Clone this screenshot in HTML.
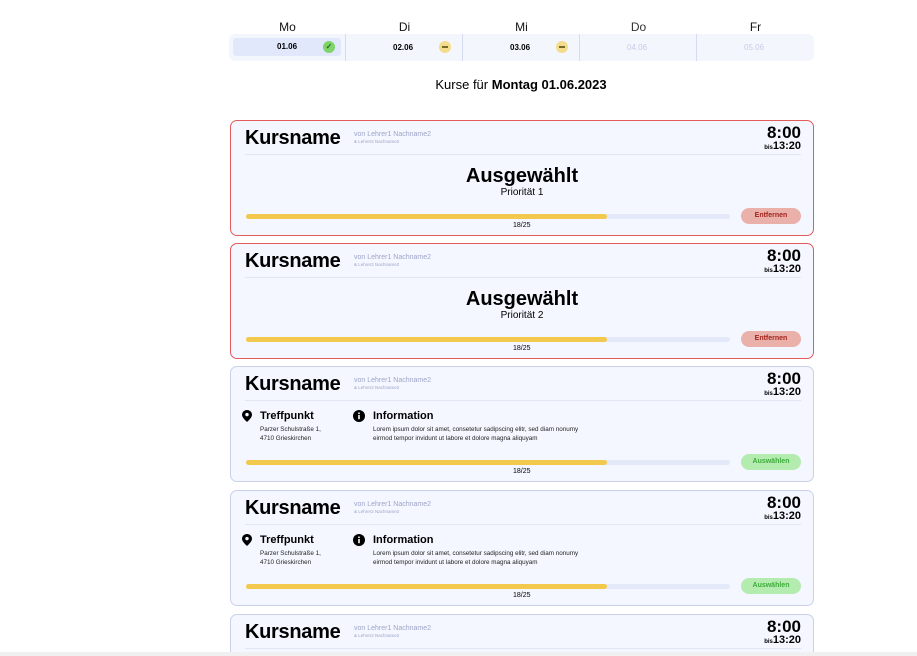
<!DOCTYPE html>
<html style="width:917px;height:656px;overflow:hidden"><head><meta charset="utf-8"><style>
*{box-sizing:border-box;margin:0;padding:0}
body{width:917px;height:656px;overflow:hidden;background:#fff;font-family:"Liberation Sans",sans-serif;color:#000;position:relative}
.days{position:absolute;left:229px;top:20px;width:585px}
.lbl{position:absolute;top:0;font-size:12px;width:117px;text-align:center;color:#111}
.bar{position:absolute;top:14px;left:0;width:585px;height:27px;background:#f3f6fd;border-radius:6px}
.cell{position:absolute;top:0;height:27px;width:117px;font-size:8px;font-weight:bold}
.sep{position:absolute;top:0;width:1px;height:27px;background:#d5dcef}
.dot{position:absolute;width:12px;height:12px;border-radius:50%;top:7px}
h2{position:absolute;top:77px;left:0;width:1042px;text-align:center;font-size:13px;font-weight:normal}
.card{position:absolute;left:230px;width:584px;height:116px;background:#f4f7ff;border:1px solid #c9d1ea;border-radius:7px;overflow:hidden}
.card.red{border-color:#e25b5b}
.kn{position:absolute;left:14px;top:6px;font-size:20px;font-weight:bold;letter-spacing:-0.3px}
.by{position:absolute;left:123px;top:10px;font-size:7px;color:#9ea4c8}
.by2{position:absolute;left:123px;top:18px;font-size:4.5px;color:#9ea4c8}
.t1{position:absolute;right:12px;top:2px;font-size:17px;font-weight:bold}
.t2{position:absolute;right:12px;top:19px;font-size:11px;font-weight:bold}
.t2 small{font-size:6px}
.hr{position:absolute;left:14px;right:12px;top:33px;height:1px;background:#e1e6f4}
.aus{position:absolute;left:0;right:0;top:44px;text-align:center;font-size:20px;font-weight:bold}
.pr{position:absolute;left:0;right:0;top:66px;text-align:center;font-size:10px}
.pb{position:absolute;left:15px;top:93px;width:484px;height:5px;background:#e3e9f8;border-radius:3px}
.pb i{display:block;width:361px;height:5px;background:#f2c94c;border-radius:3px}
.cnt{position:absolute;left:282px;top:101px;font-size:7px}
.btn{position:absolute;left:510px;top:87px;width:60px;height:16px;border-radius:8px;font-size:7px;font-weight:bold;text-align:center;line-height:16px}
.rm{background:#eab1ab;color:#a3231c}
.sel{background:#b4ecb0;color:#3dab3a}
.ic{position:absolute;font-size:11px;font-weight:bold;top:43px}
.sm{position:absolute;font-size:6.3px;line-height:9px;top:58px;color:#222}
</style></head><body>
<div class="days">
<div class="lbl" style="left:0">Mo</div><div class="lbl" style="left:117px">Di</div><div class="lbl" style="left:234px">Mi</div><div class="lbl" style="left:351px;color:#333">Do</div><div class="lbl" style="left:468px">Fr</div>
<div class="bar">
<div class="cell" style="left:0"><div style="position:absolute;left:4px;top:4px;width:108px;height:18px;background:#e1e8fb;border-radius:3px"></div><span style="position:absolute;left:48px;top:8px">01.06</span><div class="dot" style="left:94px;background:#7ed46a;color:#236b1c;font-size:8px;text-align:center;line-height:12px">✓</div></div>
<div class="sep" style="left:116px"></div>
<div class="cell" style="left:117px"><span style="position:absolute;left:47px;top:9px">02.06</span><div class="dot" style="left:93px;background:#f3dc8c"><div style="position:absolute;left:3px;top:5px;width:6px;height:2px;background:#7a6a2a"></div></div></div>
<div class="sep" style="left:233px"></div>
<div class="cell" style="left:234px"><span style="position:absolute;left:47px;top:9px">03.06</span><div class="dot" style="left:93px;background:#f3dc8c"><div style="position:absolute;left:3px;top:5px;width:6px;height:2px;background:#7a6a2a"></div></div></div>
<div class="sep" style="left:350px"></div>
<div class="cell" style="left:351px;color:#c7cde6;font-weight:normal"><span style="position:absolute;left:47px;top:9px">04.06</span></div>
<div class="sep" style="left:467px"></div>
<div class="cell" style="left:468px;color:#c7cde6;font-weight:normal"><span style="position:absolute;left:47px;top:9px">05.06</span></div>
</div></div>
<h2>Kurse für <b>Montag 01.06.2023</b></h2>

<div class="card red" style="top:120px">
<div class="kn">Kursname</div><div class="by">von Lehrer1 Nachname2</div><div class="by2">& Lehrer2 Nachname2</div>
<div class="t1">8:00</div><div class="t2"><small>bis</small>13:20</div><div class="hr"></div>
<div class="aus">Ausgewählt</div><div class="pr">Priorität 1</div>
<div class="pb"><i></i></div><div class="cnt">18/25</div><div class="btn rm">Entfernen</div></div>

<div class="card red" style="top:243px">
<div class="kn">Kursname</div><div class="by">von Lehrer1 Nachname2</div><div class="by2">& Lehrer2 Nachname2</div>
<div class="t1">8:00</div><div class="t2"><small>bis</small>13:20</div><div class="hr"></div>
<div class="aus">Ausgewählt</div><div class="pr">Priorität 2</div>
<div class="pb"><i></i></div><div class="cnt">18/25</div><div class="btn rm">Entfernen</div></div>

<div class="card" style="top:366px">
<div class="kn">Kursname</div><div class="by">von Lehrer1 Nachname2</div><div class="by2">& Lehrer2 Nachname2</div>
<div class="t1">8:00</div><div class="t2"><small>bis</small>13:20</div><div class="hr"></div>
<svg style="position:absolute;left:11px;top:43px" width="10" height="12" viewBox="0 0 10 12"><path d="M5 0C2.2 0 0 2.2 0 4.8 0 8 5 12 5 12S10 8 10 4.8C10 2.2 7.8 0 5 0z" fill="#000"/><circle cx="5" cy="4.6" r="1.7" fill="#f4f7ff"/></svg>
<div class="ic" style="left:29px">Treffpunkt</div><div class="sm" style="left:29px">Parzer Schulstraße 1,<br>4710 Grieskirchen</div>
<svg style="position:absolute;left:122px;top:43px" width="12" height="12" viewBox="0 0 12 12"><circle cx="6" cy="6" r="6" fill="#000"/><rect x="5.2" y="5" width="1.6" height="4.2" fill="#fff"/><circle cx="6" cy="3.3" r="0.9" fill="#fff"/></svg>
<div class="ic" style="left:142px">Information</div><div class="sm" style="left:142px">Lorem ipsum dolor sit amet, consetetur sadipscing elitr, sed diam nonumy<br>eirmod tempor invidunt ut labore et dolore magna aliquyam</div>
<div class="pb"><i></i></div><div class="cnt">18/25</div><div class="btn sel">Auswählen</div></div>

<div class="card" style="top:490px">
<div class="kn">Kursname</div><div class="by">von Lehrer1 Nachname2</div><div class="by2">& Lehrer2 Nachname2</div>
<div class="t1">8:00</div><div class="t2"><small>bis</small>13:20</div><div class="hr"></div>
<svg style="position:absolute;left:11px;top:43px" width="10" height="12" viewBox="0 0 10 12"><path d="M5 0C2.2 0 0 2.2 0 4.8 0 8 5 12 5 12S10 8 10 4.8C10 2.2 7.8 0 5 0z" fill="#000"/><circle cx="5" cy="4.6" r="1.7" fill="#f4f7ff"/></svg>
<div class="ic" style="left:29px">Treffpunkt</div><div class="sm" style="left:29px">Parzer Schulstraße 1,<br>4710 Grieskirchen</div>
<svg style="position:absolute;left:122px;top:43px" width="12" height="12" viewBox="0 0 12 12"><circle cx="6" cy="6" r="6" fill="#000"/><rect x="5.2" y="5" width="1.6" height="4.2" fill="#fff"/><circle cx="6" cy="3.3" r="0.9" fill="#fff"/></svg>
<div class="ic" style="left:142px">Information</div><div class="sm" style="left:142px">Lorem ipsum dolor sit amet, consetetur sadipscing elitr, sed diam nonumy<br>eirmod tempor invidunt ut labore et dolore magna aliquyam</div>
<div class="pb"><i></i></div><div class="cnt">18/25</div><div class="btn sel">Auswählen</div></div>

<div class="card" style="top:614px;height:42px;border-bottom:none;border-radius:7px 7px 0 0">
<div class="kn">Kursname</div><div class="by">von Lehrer1 Nachname2</div><div class="by2">& Lehrer2 Nachname2</div>
<div class="t1">8:00</div><div class="t2"><small>bis</small>13:20</div><div class="hr"></div></div>

<div style="position:absolute;left:0;top:652px;width:917px;height:4px;background:#f0f0f0"></div>
</body></html>
